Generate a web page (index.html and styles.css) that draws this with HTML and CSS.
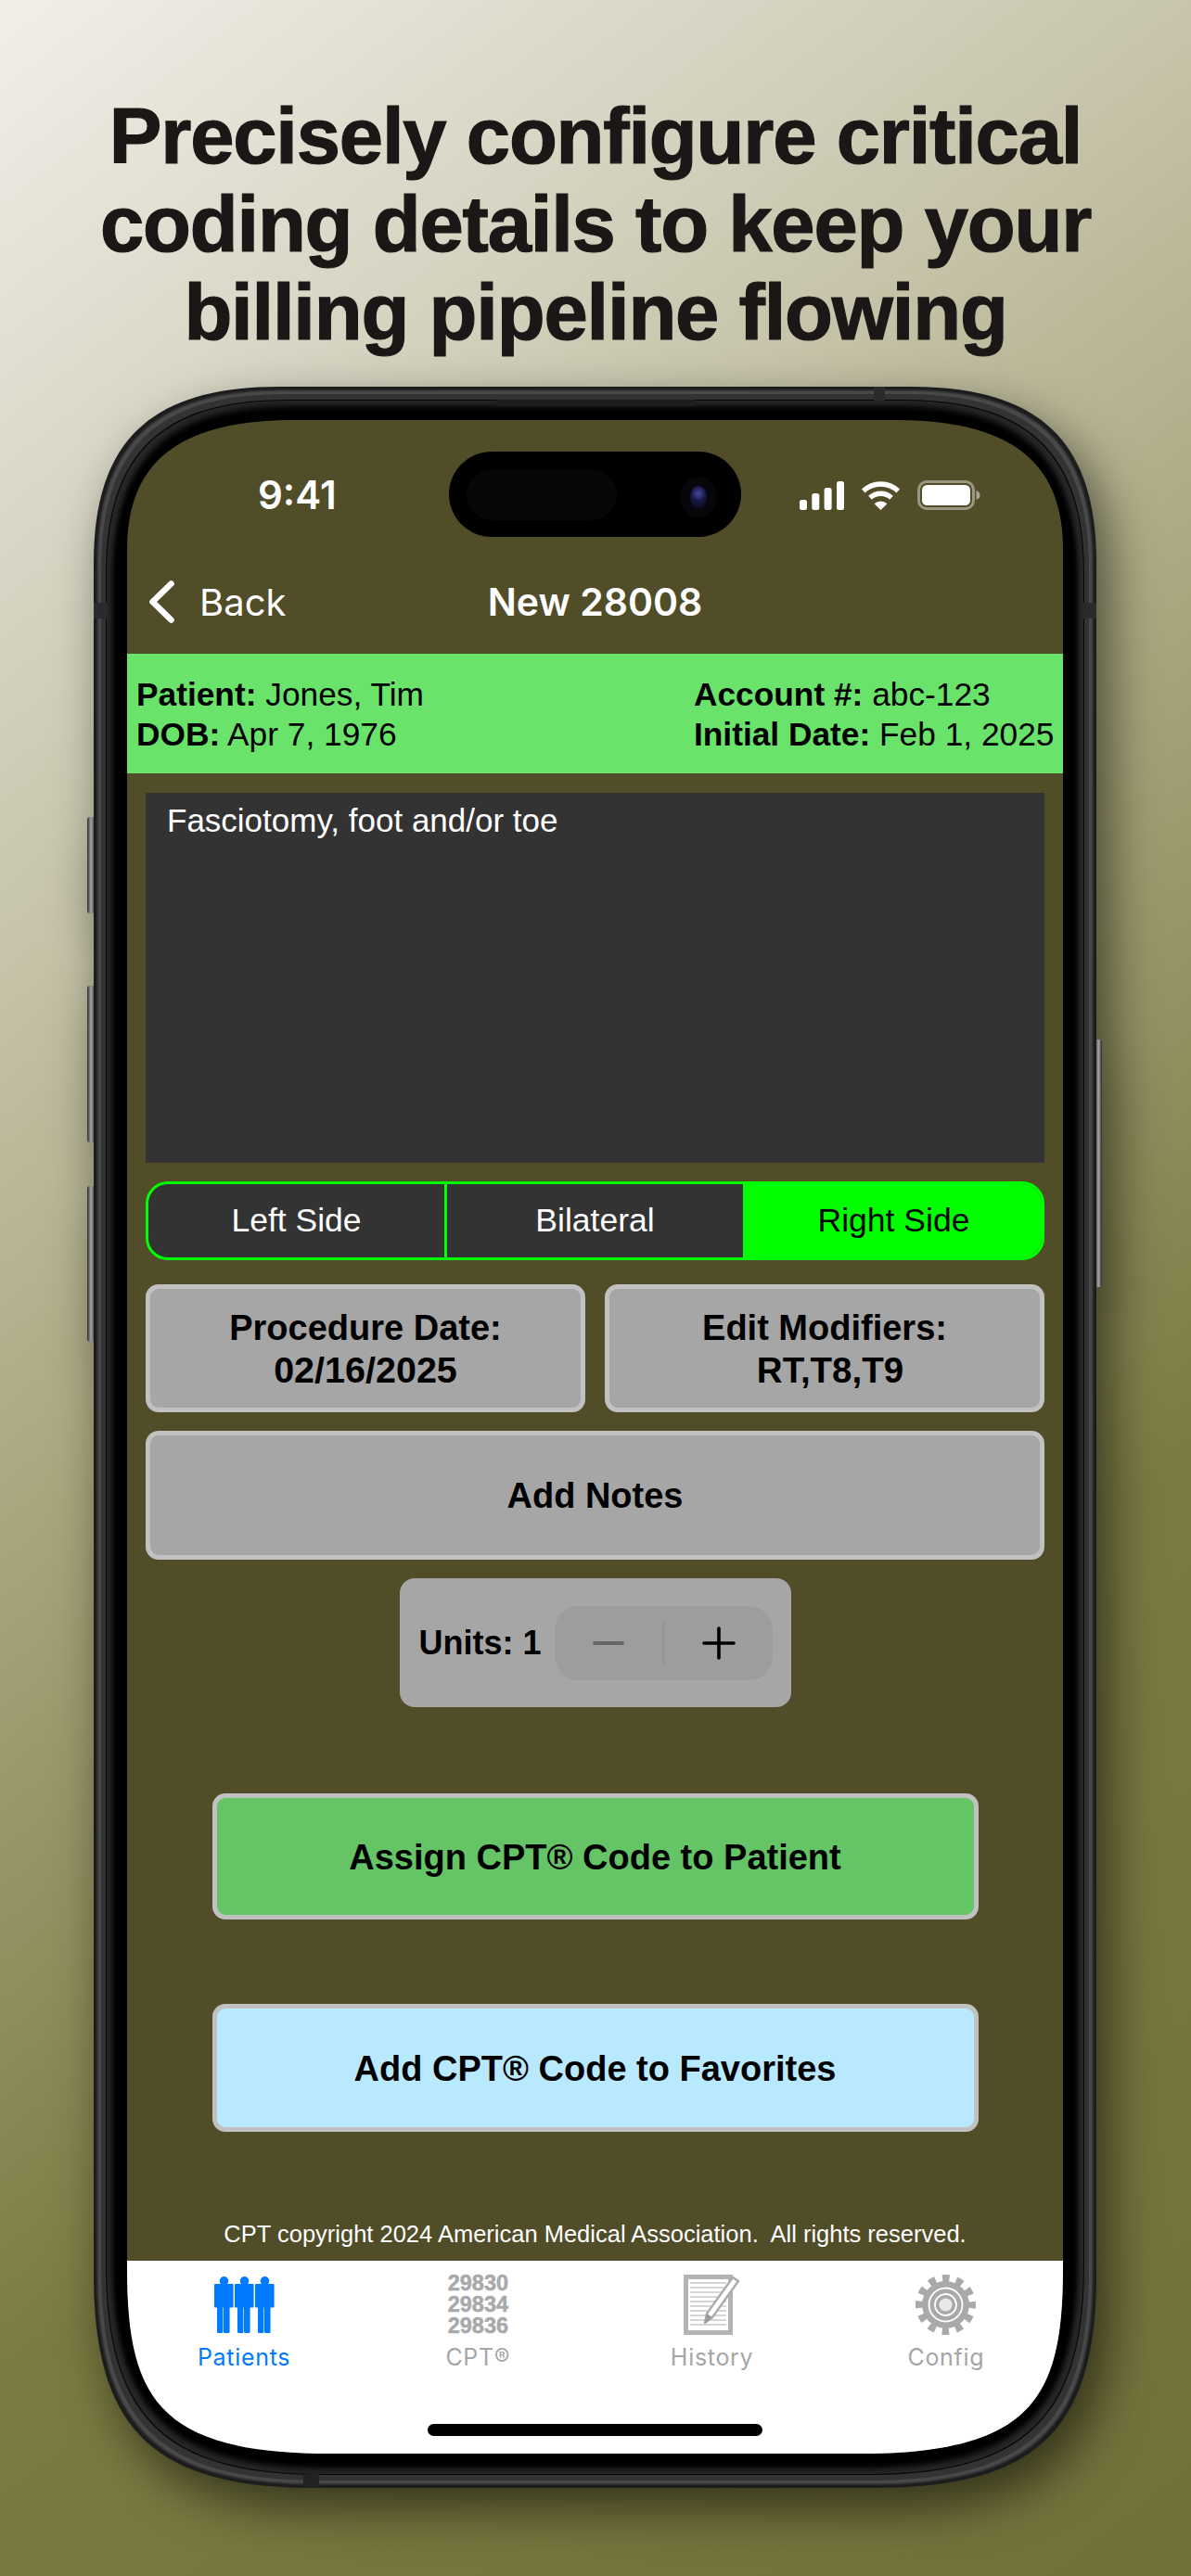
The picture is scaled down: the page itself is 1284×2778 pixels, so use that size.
FILE: index.html
```html
<!DOCTYPE html>
<html lang="en">
<head>
<meta charset="utf-8">
<title>New 28008</title>
<link rel="stylesheet" href="styles.css">
</head>
<body>
<h1 class="headline">Precisely configure critical<br>coding details to keep your<br>billing pipeline flowing</h1>
<div class="phone">
  <svg class="frame" viewBox="0 0 1081 2266" width="1081" height="2266" aria-hidden="true">
    <defs>
      <path id="o" d="M0,190 C0,60 60,0 200,0 H881 C1021,0 1081,60 1081,190 V2036 C1081,2206 1014,2266 841,2266 H240 C67,2266 0,2206 0,2036 Z"/>
      <linearGradient id="btnL" x1="0" x2="1" y1="0" y2="0"><stop offset="0" stop-color="#2a2a2a"/><stop offset=".45" stop-color="#a4a4a4"/><stop offset="1" stop-color="#2c2c2c"/></linearGradient>
      <linearGradient id="btnR" x1="0" x2="1" y1="0" y2="0"><stop offset="0" stop-color="#333"/><stop offset=".55" stop-color="#a4a4a4"/><stop offset="1" stop-color="#2a2a2a"/></linearGradient>
      <filter id="soft" x="-5%" y="-5%" width="110%" height="110%"><feGaussianBlur stdDeviation="3"/></filter>
      <filter id="soft1" x="-5%" y="-5%" width="110%" height="110%"><feGaussianBlur stdDeviation="1"/></filter>
    </defs>
    <g class="btns">
      <rect x="-7" y="464" width="9" height="104" rx="3" fill="url(#btnL)"/>
      <rect x="-7" y="646" width="9" height="169" rx="3" fill="url(#btnL)"/>
      <rect x="-7" y="862" width="9" height="168" rx="3" fill="url(#btnL)"/>
      <rect x="1079" y="704" width="8" height="267" rx="3" fill="url(#btnR)"/>
    </g>
    <use href="#o" fill="#1c1c1c"/>
    <use href="#o" fill="#4a4a4a" filter="url(#soft1)" transform="translate(4 4) scale(.9926 .99647)"/>
    <use href="#o" fill="#333" transform="translate(8 8) scale(.9852 .99294)"/>
    <use href="#o" fill="#070707" transform="translate(13 14) scale(.97595 .98765)"/>
    <use href="#o" fill="#262626" transform="translate(14 15) scale(.97410 .98676)"/>
    <use href="#o" fill="#000" filter="url(#soft)" transform="translate(20 21) scale(.96300 .98147)"/>
    <rect x="434" y="14" width="214" height="7" fill="#1d1d1d"/>
    <rect x="841" y="0" width="12" height="15" fill="#2b2b2b"/>
    <rect x="226" y="2251" width="17" height="15" fill="#222"/>
    <rect x="0" y="233" width="14" height="17" fill="#2b2b2b"/>
    <rect x="1067" y="233" width="14" height="17" fill="#2b2b2b"/>
  </svg>
  <div class="screen">
    <div class="island"><span class="sensor"></span><span class="camera"><span class="lens"></span></span></div>
    <div class="status">
      <span class="time">9:41</span>
      <div class="status-icons">
        <svg viewBox="0 0 48 31" width="48" height="31" fill="#fff"><rect x="0" y="20" width="8" height="11" rx="2.5"/><rect x="13.3" y="13" width="8" height="18" rx="2.5"/><rect x="26.6" y="7" width="8" height="24" rx="2.5"/><rect x="40" y="0" width="8" height="31" rx="2.5"/></svg>
        <svg viewBox="0 0 43 32" width="43" height="32"><path d="M2.8 11.5 A27 27 0 0 1 40.2 11.5 M10 18.8 A17 17 0 0 1 33 18.8" fill="none" stroke="#fff" stroke-width="5.4"/><path d="M14.6 25.2 A10 10 0 0 1 28.4 25.2 L21.5 32 Z" fill="#fff"/></svg>
        <svg viewBox="0 0 68 32" width="68" height="32"><rect x="1.5" y="1.5" width="59" height="29" rx="8.5" fill="none" stroke="#fff" stroke-opacity=".42" stroke-width="3"/><rect x="5" y="5" width="52" height="22" rx="5.5" fill="#fff"/><path d="M63.5 11 C66.5 12 67.5 14 67.5 16 C67.5 18 66.5 20 63.5 21 Z" fill="#fff" fill-opacity=".5"/></svg>
      </div>
    </div>
    <nav class="nav">
      <div class="back">
        <svg viewBox="0 0 27 46" width="27" height="46"><path d="M23.5 3.5 L3.5 23 L23.5 42.5" fill="none" stroke="#fff" stroke-width="6.6" stroke-linecap="round" stroke-linejoin="round"/></svg>
        <span>Back</span>
      </div>
      <div class="title">New 28008</div>
    </nav>
    <section class="banner">
      <div><b>Patient:</b> Jones, Tim</div>
      <div><b>Account #:</b> abc-123</div>
      <div><b>DOB:</b> Apr 7, 1976</div>
      <div><b>Initial Date:</b> Feb 1, 2025</div>
    </section>
    <main class="main">
      <div class="description">Fasciotomy, foot and/or toe</div>
      <div class="segments">
        <div class="segment">Left Side</div>
        <div class="segment">Bilateral</div>
        <div class="segment is-on">Right Side</div>
      </div>
      <div class="pair">
        <button class="btn btn-gray">Procedure Date:<br><span class="value">02/16/2025</span></button>
        <button class="btn btn-gray">Edit Modifiers:<br><span class="value value-mods">RT,T8,T9</span></button>
      </div>
      <button class="btn btn-gray btn-notes">Add Notes</button>
      <div class="units">
        <span class="units-label">Units: 1</span>
        <div class="stepper">
          <span class="step"><span class="minus"></span></span>
          <span class="step-line"></span>
          <span class="step"><svg viewBox="0 0 36 36" width="36" height="36"><path d="M18 2 V34 M2 18 H34" stroke="#000" stroke-width="3.6" stroke-linecap="round"/></svg></span>
        </div>
      </div>
      <button class="btn btn-action btn-assign">Assign CPT® Code to Patient</button>
      <button class="btn btn-action btn-fav">Add CPT® Code to Favorites</button>
      <p class="copyright">CPT copyright 2024 American Medical Association.&nbsp; All rights reserved.</p>
    </main>
    <footer class="tabs">
      <div class="tab is-active">
        <div class="tab-icon">
          <svg viewBox="0 0 65 61" width="65" height="61" fill="#007aff">
            <defs><g id="man"><circle cx="10.5" cy="4.8" r="4.8"/><rect x="0" y="8" width="20.6" height="25.5" rx="1"/><rect x="3" y="30" width="6.4" height="31" rx="1.5"/><rect x="10" y="30" width="6.6" height="31" rx="1.5"/></g></defs>
            <use href="#man"/><use href="#man" x="22"/><use href="#man" x="44"/>
          </svg>
        </div>
        <span class="tab-label">Patients</span>
      </div>
      <div class="tab">
        <div class="tab-icon"><div class="codes"><span>29830</span><span>29834</span><span>29836</span></div></div>
        <span class="tab-label">CPT®</span>
      </div>
      <div class="tab">
        <div class="tab-icon">
          <svg viewBox="0 0 61 65" width="61" height="65">
            <rect x="2.5" y="2.5" width="48" height="60" fill="#fff" stroke="#b4b4b4" stroke-width="5"/>
            <path d="M7 9 H46 M7 14 H46 M7 19 H46 M7 24 H46 M7 29 H46 M7 34 H46 M7 39 H46 M7 44 H46 M7 49 H46 M7 54 H46" stroke="#d6d6d6" stroke-width="2"/>
            <path d="M53 3 L59 7 L31 46 L23 52 L25 42 Z" fill="#fff" stroke="#acacac" stroke-width="2.4" stroke-linejoin="round"/>
            <path d="M25 42 L23 52 L31 46 Z" fill="#9a9a9a"/>
          </svg>
        </div>
        <span class="tab-label">History</span>
      </div>
      <div class="tab">
        <div class="tab-icon">
          <svg viewBox="0 0 65 65" width="65" height="65">
            <circle cx="32.5" cy="32.5" r="28" fill="none" stroke="#a9a9a9" stroke-width="9" stroke-dasharray="7.3 7.36" stroke-dashoffset="3.6"/>
            <circle cx="32.5" cy="32.5" r="25.5" fill="#a9a9a9"/>
            <circle cx="32.5" cy="32.5" r="18" fill="none" stroke="#fff" stroke-width="1.8"/>
            <circle cx="32.5" cy="32.5" r="11.5" fill="none" stroke="#fff" stroke-width="1.8"/>
            <circle cx="32.5" cy="32.5" r="7" fill="#e9e9e9"/>
          </svg>
        </div>
        <span class="tab-label">Config</span>
      </div>
      <div class="home-bar"></div>
    </footer>
  </div>
</div>
</body>
</html>
```
FILE: styles.css
```css
* { box-sizing: border-box; }
html, body { margin: 0; padding: 0; }
body {
  width: 1284px;
  height: 2778px;
  overflow: hidden;
  background: linear-gradient(142deg, #f1efe9 0%, #c9c6ae 26%, #a8a67d 44%, #7a7a42 68%, #72703a 100%);
  font-family: "Liberation Sans", Arial, sans-serif;
}
.headline {
  margin: 0;
  height: 417px;
  padding-top: 99px;
  text-align: center;
  font-family: "Liberation Sans", Arial, sans-serif;
  font-weight: 700;
  font-size: 85px;
  line-height: 95px;
  letter-spacing: -1.2px;
  color: #1b1716;
  -webkit-text-stroke: 1.2px #1b1716;
}
.phone {
  position: relative;
  width: 1081px;
  height: 2266px;
  margin-left: 101px;
  padding: 36px 36px 37px;
}
.frame {
  position: absolute;
  left: 0;
  top: 0;
  overflow: visible;
  filter: drop-shadow(14px 22px 26px rgba(0, 0, 0, .55));
}
.screen {
  position: relative;
  display: flex;
  flex-direction: column;
  width: 1009px;
  height: 2193px;
  background: #504d28;
  clip-path: path("M0,140 C0,50 50,0 180,0 H829 C959,0 1009,50 1009,140 V1993 C1009,2133 976,2193 789,2193 H220 C33,2193 0,2133 0,1993 Z");
}
.island {
  position: absolute;
  left: 347px;
  top: 34px;
  width: 315px;
  height: 92px;
  border-radius: 46px;
  background: #000;
}
.sensor {
  position: absolute;
  left: 19px;
  top: 20px;
  width: 162px;
  height: 54px;
  border-radius: 27px;
  background: #060606;
}
.camera {
  position: absolute;
  left: 249px;
  top: 27px;
  width: 40px;
  height: 44px;
  border-radius: 50%;
  background: #07060a;
}
.lens {
  position: absolute;
  left: 11px;
  top: 10px;
  width: 18px;
  height: 24px;
  border-radius: 50%;
  background: radial-gradient(circle at 50% 35%, #3c3f8c 0 10%, #14163e 45%, #0a0b22 100%);
}
.status {
  display: flex;
  align-items: center;
  justify-content: space-between;
  height: 147px;
  padding: 64px 89px 49px 141px;
  color: #fff;
}
.time {
  font-family: Inter, sans-serif;
  font-weight: 600;
  font-size: 42px;
  line-height: 34px;
}
.status-icons {
  display: flex;
  align-items: center;
  gap: 18px;
}
.status-icons svg { display: block; }
.nav {
  position: relative;
  display: flex;
  align-items: center;
  height: 98px;
  margin-bottom: 7px;
  padding-left: 24px;
  font-family: Inter, sans-serif;
  font-size: 41px;
  color: #fff;
}
.back {
  display: flex;
  align-items: center;
  gap: 27px;
  font-size: 40px;
}
.back svg { display: block; }
.title {
  position: absolute;
  left: 0;
  right: 0;
  text-align: center;
  font-weight: 600;
}
.banner {
  display: grid;
  grid-template-columns: 601px 1fr;
  align-content: center;
  height: 129px;
  padding-left: 10px;
  background: #69e36a;
  font-size: 35.3px;
  line-height: 43px;
  color: #000;
}
.main {
  display: flex;
  flex: 1;
  flex-direction: column;
  padding: 21px 20px 0;
}
.description {
  height: 399px;
  padding: 8px 23px;
  background: #333;
  color: #fff;
  font-size: 35px;
  line-height: 44px;
}
.segments {
  display: flex;
  height: 85px;
  margin-top: 20px;
  overflow: hidden;
  border: 3px solid #0f0;
  border-radius: 24px;
  background: #333;
}
.segment {
  display: flex;
  flex: 1;
  align-items: center;
  justify-content: center;
  color: #fff;
  font-size: 35.5px;
}
.segment + .segment { border-left: 3px solid #0f0; }
.segment.is-on { background: #0f0; color: #000; }
.pair {
  display: flex;
  gap: 21px;
  margin-top: 26px;
}
.btn {
  display: block;
  margin: 0;
  padding: 2px 0 0;
  border: 5px solid #c1c1c1;
  border-radius: 14px;
  color: #000;
  font-family: "Liberation Sans", Arial, sans-serif;
  font-weight: 700;
  font-size: 38px;
  line-height: 45px;
  text-align: center;
}
.value { font-size: 39.5px; }
.value-mods { padding-left: 12px; font-size: 38.5px; }
.btn-gray { background: #a6a6a6; }
.pair .btn { flex: 1; height: 138px; }
.btn-notes { height: 139px; margin-top: 20px; }
.units {
  display: flex;
  align-items: center;
  gap: 14px;
  align-self: center;
  width: 422px;
  height: 139px;
  margin-top: 20px;
  padding-left: 21px;
  border-radius: 16px;
  background: #a6a6a6;
  font-weight: 700;
  font-size: 36px;
}
.stepper {
  display: flex;
  align-items: center;
  width: 235px;
  height: 80px;
  border-radius: 26px;
  background: #9d9d9d;
}
.step {
  display: flex;
  flex: 1;
  align-items: center;
  justify-content: center;
}
.step svg { display: block; }
.minus {
  width: 34px;
  height: 4px;
  border-radius: 2px;
  background: #666;
}
.step-line {
  width: 3px;
  height: 44px;
  background: #969696;
}
.btn-action {
  align-self: center;
  width: 826px;
}
.btn-assign { height: 136px; margin-top: 93px; background: #64c466; }
.btn-fav { height: 138px; margin-top: 91px; background: #b9e9ff; }
.copyright {
  margin: 95px 0 0;
  color: #fff;
  font-size: 25.5px;
  line-height: 30px;
  text-align: center;
  white-space: nowrap;
}
.tabs {
  position: relative;
  display: flex;
  flex: none;
  height: 208px;
  padding-top: 15px;
  background: #fff;
}
.tab {
  display: flex;
  flex: 1;
  flex-direction: column;
  align-items: center;
  color: #a6a6a6;
}
.tab.is-active { color: #007aff; }
.tab-icon {
  display: flex;
  align-items: center;
  justify-content: center;
  height: 65px;
}
.tab-icon svg { display: block; }
.tab-label {
  margin-top: 7px;
  font-family: Inter, sans-serif;
  font-weight: 400;
  font-size: 25px;
  line-height: 34px;
  letter-spacing: .7px;
}
.codes {
  display: flex;
  flex-direction: column;
  font-weight: 700;
  font-size: 23.5px;
  line-height: 23px;
  color: #a9a9a9;
  -webkit-text-stroke: .5px #a9a9a9;
}
.home-bar {
  position: absolute;
  left: 324px;
  bottom: 19px;
  width: 361px;
  height: 13px;
  border-radius: 7px;
  background: #000;
}
```
